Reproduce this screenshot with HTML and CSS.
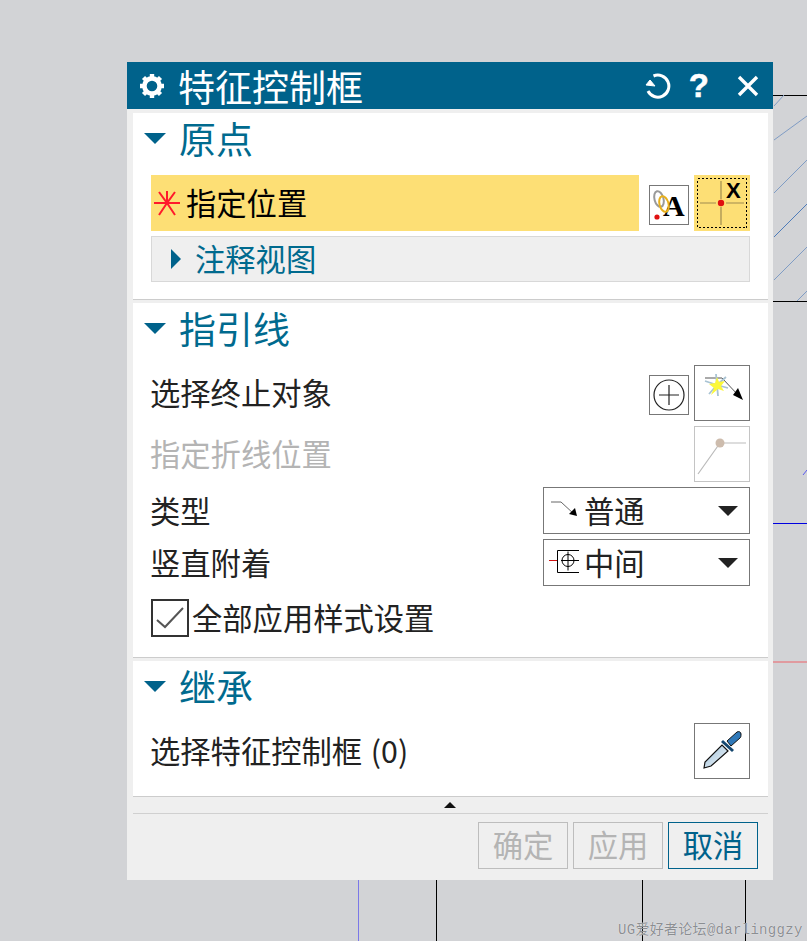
FILE: index.html
```html
<!DOCTYPE html>
<html lang="zh-CN">
<head>
  <meta charset="UTF-8" />
  <title>特征控制框</title>
  <link rel="stylesheet" href="styles.css">
</head>
<body>
  <!-- drawing behind the dialog -->
  <svg class="canvas" width="807" height="941" viewBox="0 0 807 941">
    <g stroke="#000" stroke-width="1" shape-rendering="crispEdges">
      <path d="M773 95.5H807M773 301.5H807"/>
      <path d="M436.5 880V941M642.5 880V941M745.5 880V941"/>
    </g>
    <path d="M358.5 880V941" stroke="#7b78e8" shape-rendering="crispEdges"/>
    <path d="M773 523.5H807" stroke="#0000e0" shape-rendering="crispEdges"/>
    <path d="M773 661.5H807" stroke="#e09a9f" stroke-width="2" shape-rendering="crispEdges"/>
    <g stroke="#7f9cc4" stroke-width="1" fill="none">
      <path d="M774 106L784 95"/>
      <path d="M774 140L807 116"/>
      <path d="M774 193L807 160"/>
      <path d="M774 237L807 204" stroke="#4f7cb8"/>
      <path d="M774 280L807 247"/>
      <path d="M797 301L807 291"/>
      <path d="M803 475L807 470" stroke="#5a5af0"/>
    </g>
  </svg>

  <div class="dialog">
    <div class="titlebar">
      <svg class="gear" width="26" height="26" viewBox="0 0 26 26">
        <circle cx="13" cy="13" r="7.6" fill="none" stroke="#fff" stroke-width="4.6"/>
        <g stroke="#fff" stroke-width="4.4">
          <path d="M13 1V5M13 21V25M1 13H5M21 13H25M4.5 4.5L7.3 7.3M18.7 18.7L21.5 21.5M4.5 21.5L7.3 18.7M18.7 7.3L21.5 4.5"/>
        </g>
      </svg>
      <span class="title">特征控制框</span>
      <svg class="reset" width="26" height="26" viewBox="0 0 26 26">
        <path d="M8.5 3A11 11 0 1 1 3 18" fill="none" stroke="#fff" stroke-width="3"/>
        <path d="M5 7L1 12L10 13Z" fill="#fff" stroke="#fff" stroke-width="1"/>
      </svg>
      <span class="help">?</span>
      <svg class="close" width="22" height="22" viewBox="0 0 22 22">
        <path d="M2 2L20 20M20 2L2 20" stroke="#fff" stroke-width="3.4"/>
      </svg>
    </div>

    <div class="section first">
      <div class="sec-head"><i class="tri"></i><span>原点</span></div>
      <div class="row">
        <div class="required">
          <svg width="26" height="26" viewBox="0 0 26 26">
            <path d="M0 13H26M13 1V13M5 2L13 13L21 2M13 13L5 25M13 13L21 25" stroke="#ff1a2b" stroke-width="2" fill="none"/>
          </svg>
          <span>指定位置</span>
        </div>
        <div class="btn small">
          <svg width="38" height="38" viewBox="0 0 38 38">
            <text x="13" y="30" class="serif-a">A</text>
            <ellipse cx="9" cy="13" rx="4.5" ry="8" transform="rotate(-15 9 13)" fill="none" stroke="#9a9a9a" stroke-width="2"/>
            <ellipse cx="14" cy="18" rx="4.5" ry="8" transform="rotate(-15 14 18)" fill="none" stroke="#e8b01c" stroke-width="2"/>
            <circle cx="7" cy="31" r="2.6" fill="#e01010"/>
          </svg>
        </div>
        <div class="btn big active">
          <svg width="54" height="54" viewBox="0 0 54 54">
            <rect x="2.5" y="2.5" width="49" height="49" fill="none" stroke="#000" stroke-dasharray="2 2" shape-rendering="crispEdges"/>
            <path d="M5 27H21M31 27H49M26 5V23M26 31V49" stroke="#a08c50" stroke-width="1.2"/>
            <circle cx="26" cy="27" r="3.2" fill="#e01010"/>
            <text x="31" y="22" class="sans-x">X</text>
          </svg>
        </div>
      </div>
      <div class="subgroup"><i class="tri-right"></i><span>注释视图</span></div>
    </div>

    <div class="section">
      <div class="sec-head"><i class="tri"></i><span>指引线</span></div>
      <div class="row">
        <span class="label">选择终止对象</span>
        <div class="btn small">
          <svg width="38" height="38" viewBox="0 0 38 38">
            <circle cx="19" cy="19" r="15" fill="none" stroke="#222" stroke-width="1.2"/>
            <path d="M19 9V29M9 19H29" stroke="#222" stroke-width="1.2"/>
          </svg>
        </div>
        <div class="btn big">
          <svg width="54" height="54" viewBox="0 0 54 54">
            <path d="M10 12H27L44 30" fill="none" stroke="#555" stroke-width="1"/>
            <path d="M22 19L10 15M22 19L21 8M22 19L31 11M22 19L33 22M22 19L23 30M22 19L14 28" stroke="#a9c3d3" stroke-width="1.8"/>
            <path d="M22 11L24 16L30 15L26 20L29 25L23 23L16 29L19 22L14 18L20 17Z" fill="#fbf83c"/>
            <path d="M48 34L38 29L43 22Z" fill="#000"/>
          </svg>
        </div>
      </div>
      <div class="row disabled">
        <span class="label">指定折线位置</span>
        <div class="btn big">
          <svg width="54" height="54" viewBox="0 0 54 54">
            <path d="M3 47L25 16H51" fill="none" stroke="#bbb" stroke-width="1.2"/>
            <circle cx="25" cy="16" r="4.5" fill="#cdbcad"/>
          </svg>
        </div>
      </div>
      <div class="row select-row">
        <span class="label">类型</span>
        <div class="select">
          <svg width="28" height="24" viewBox="0 0 28 24">
            <path d="M1 3H11L24 15" fill="none" stroke="#666" stroke-width="1"/>
            <path d="M27 17L19 15L25 9Z" fill="#000"/>
          </svg>
          <span>普通</span>
          <i class="caret"></i>
        </div>
      </div>
      <div class="row select-row attach">
        <span class="label">竖直附着</span>
        <div class="select">
          <svg width="32" height="26" viewBox="0 0 32 26">
            <path d="M1 10.5H9" stroke="#d01010"/>
            <path d="M31 0.5H9.5V22.5H31M13 10.5H31M20 1.5V20.5" fill="none" stroke="#000"/>
            <circle cx="20" cy="10.5" r="6" fill="none" stroke="#000"/>
          </svg>
          <span>中间</span>
          <i class="caret"></i>
        </div>
      </div>
      <label class="check">
        <span class="box">
          <svg width="34" height="34" viewBox="0 0 34 34">
            <path d="M4 19L12 26L30 7" fill="none" stroke="#555" stroke-width="2"/>
          </svg>
        </span>
        <span class="check-text">全部应用样式设置</span>
      </label>
    </div>

    <div class="section last">
      <div class="sec-head"><i class="tri"></i><span>继承</span></div>
      <div class="row">
        <span class="label">选择特征控制框 (0)</span>
        <div class="btn big">
          <svg width="54" height="54" viewBox="0 0 54 54">
            <defs>
              <linearGradient id="glass" x1="0" y1="0" x2="1" y2="1">
                <stop offset="0" stop-color="#9dbfd8"/>
                <stop offset="1" stop-color="#f2f7fb"/>
              </linearGradient>
            </defs>
            <path d="M9 44L10 38L27 21L33 27L16 42Z" fill="url(#glass)" stroke="#111" stroke-width="1.2"/>
            <path d="M27 17L38 27" stroke="#14466e" stroke-width="3"/>
            <path d="M32 17L42 8C44 7 46 8 46 10C46 12 46 13 45 14L36 22Z" fill="#2f78b8" stroke="#111" stroke-width="1"/>
          </svg>
        </div>
      </div>
    </div>

    <div class="grip"><i></i></div>
    <div class="footer">
      <button class="off">确定</button>
      <button class="off">应用</button>
      <button class="cancel">取消</button>
    </div>
  </div>

  <div class="watermark">UG爱好者论坛@darlinggzy</div>
</body>
</html>
```

FILE: styles.css
```css
html, body {
  margin: 0;
  padding: 0;
}
body {
  width: 807px;
  height: 941px;
  overflow: hidden;
  position: relative;
  background: #d2d3d6;
  font-family: "Noto Sans CJK SC", "Noto Sans", sans-serif;
  color: #222;
}
.canvas {
  position: absolute;
  left: 0;
  top: 0;
}
.dialog {
  position: relative;
  box-sizing: border-box;
  width: 646px;
  height: 818px;
  margin: 62px 0 0 127px;
  background: #efefef;
  display: flex;
  flex-direction: column;
}

/* title bar */
.titlebar {
  height: 47px;
  background: #00628b;
  color: #fff;
  display: flex;
  align-items: center;
  margin-bottom: 4px;
  padding-left: 12px;
}
.title {
  font-size: 37px;
  line-height: 47px;
  margin: 2px 0 0 13px;
  flex: 1;
  white-space: nowrap;
}
.reset {
  margin-right: 18px;
}
.help {
  font-family: "Liberation Sans", sans-serif;
  font-weight: bold;
  font-size: 33px;
  line-height: 47px;
  margin-right: 28px;
  -webkit-text-stroke: .5px #fff;
}
.close {
  margin-right: 14px;
}

/* sections */
.section {
  background: #fff;
  margin: 0 5px 3px 6px;
  padding: 0 18px 20px;
  border-bottom: 1px solid #ccc;
}
.section.first {
  padding-bottom: 17px;
}
.section.last {
  padding-bottom: 17px;
  margin-bottom: 0;
}
.sec-head {
  height: 62px;
  box-sizing: border-box;
  padding-bottom: 12px;
  display: flex;
  align-items: center;
  font-size: 37px;
  color: #006a8e;
  margin-left: -7px;
}
.sec-head span {
  margin-left: 13px;
}
.tri {
  width: 0;
  height: 0;
  border-left: 11px solid transparent;
  border-right: 11px solid transparent;
  border-top: 11px solid #00628b;
}
.row {
  height: 56px;
  margin-bottom: 5px;
  display: flex;
  align-items: center;
  font-size: 30.3px;
}
.row:last-child {
  margin-bottom: 0;
}
.label {
  flex: 1;
  white-space: nowrap;
  margin-left: -1px;
  padding-bottom: 2px;
  word-spacing: 2px;
}
.disabled .label {
  color: #b4b4b4;
}
.disabled .btn {
  border-color: #c4c4c4;
}
.required {
  flex: 1;
  height: 56px;
  background: #fddf75;
  color: #000;
  display: flex;
  align-items: center;
  padding-left: 3px;
}
.required span {
  margin-left: 6px;
  padding-bottom: 2px;
}
.btn {
  box-sizing: border-box;
  border: 1px solid #777;
  background: #fff;
  flex: none;
  display: flex;
}
.btn.small {
  width: 40px;
  height: 40px;
  margin-left: 10px;
  margin-top: 4px;
}
.btn.big {
  width: 56px;
  height: 56px;
  margin-left: 5px;
}
.btn.active {
  background: #fddf75;
  border-color: #fddf75;
}
.serif-a {
  font-family: "Liberation Serif", serif;
  font-weight: bold;
  font-size: 30px;
  fill: #000;
}
.sans-x {
  font-family: "Liberation Sans", sans-serif;
  font-weight: bold;
  font-size: 22px;
  fill: #000;
}
.subgroup {
  box-sizing: border-box;
  height: 46px;
  background: #efefef;
  border: 1px solid #d8d8d8;
  display: flex;
  align-items: center;
  font-size: 30.3px;
  color: #006a8e;
  padding-left: 19px;
}
.subgroup span {
  margin-left: 14px;
  padding-bottom: 2px;
}
.tri-right {
  width: 0;
  height: 0;
  border-top: 10px solid transparent;
  border-bottom: 10px solid transparent;
  border-left: 10px solid #00628b;
}

/* dropdowns */
.select-row {
  height: 47px;
}
.select {
  box-sizing: border-box;
  width: 207px;
  height: 47px;
  border: 1px solid #777;
  display: flex;
  align-items: center;
  padding-left: 6px;
}
.select span {
  margin-left: 6px;
  flex: 1;
  padding-bottom: 2px;
}
.select svg {
  flex: none;
}
.caret {
  width: 0;
  height: 0;
  border-left: 10px solid transparent;
  border-right: 10px solid transparent;
  border-top: 10px solid #222;
  margin-right: 11px;
}
.attach .select svg {
  margin-left: -2px;
}
.attach .select span {
  margin-left: 4px;
}

/* checkbox */
.check {
  display: flex;
  align-items: center;
  height: 38px;
  margin-top: 13px;
  font-size: 30.3px;
  gap: 3px;
}
.check-text {
  padding-bottom: 2px;
}
.box {
  box-sizing: border-box;
  width: 38px;
  height: 38px;
  border: 2px solid #333;
  display: flex;
  flex: none;
}

/* bottom */
.grip {
  height: 16px;
  margin: 0 5px 0 6px;
  border-bottom: 1px solid #d0d0d0;
  display: flex;
  justify-content: center;
  align-items: center;
}
.grip i {
  width: 0;
  height: 0;
  margin-left: -2px;
  border-left: 6px solid transparent;
  border-right: 6px solid transparent;
  border-bottom: 6px solid #111;
}
.footer {
  display: flex;
  justify-content: flex-end;
  gap: 5px;
  padding: 8px 15px 0 0;
}
.footer button {
  box-sizing: border-box;
  width: 90px;
  height: 47px;
  padding: 0 0 2px;
  background: #efefef;
  border: 1px solid #bdbdbd;
  font-family: inherit;
  font-size: 30.3px;
  line-height: 1;
  color: #b4b4b4;
}
.footer .cancel {
  border-color: #00628b;
  color: #00628b;
}

.watermark {
  position: absolute;
  left: 618px;
  top: 921px;
  font-family: "Liberation Mono", "Noto Sans CJK SC", monospace;
  font-size: 14px;
  letter-spacing: .3px;
  line-height: 18px;
  color: #8b8e92;
  text-shadow: 0 0 1px #fff;
  white-space: nowrap;
}
```
